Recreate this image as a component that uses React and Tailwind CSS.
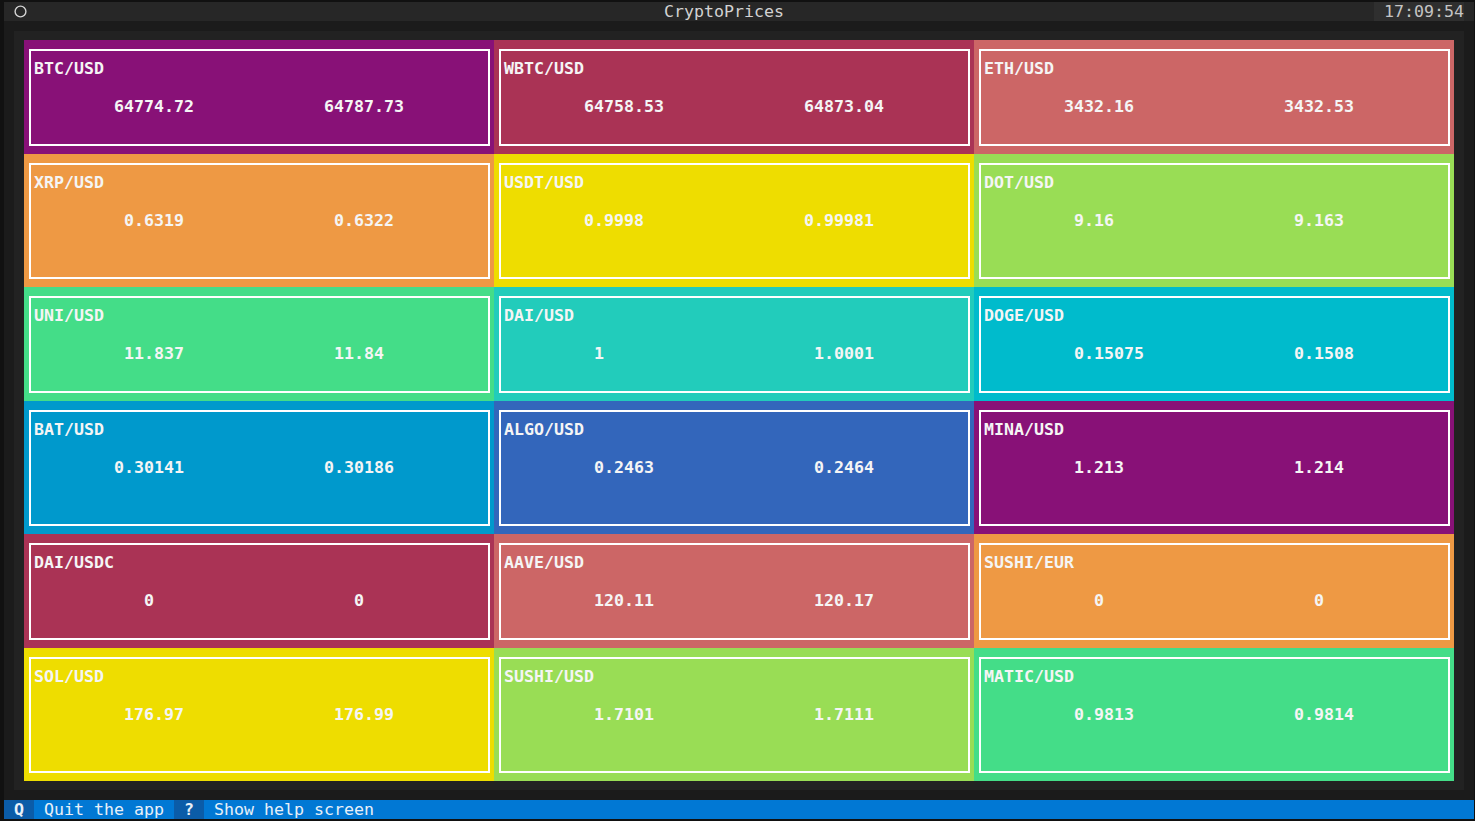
import React from "react";

const C = {
  purple: "bg-[#881177]",
  crimson: "bg-[#aa3355]",
  salmon: "bg-[#cc6666]",
  orange: "bg-[#ee9944]",
  yellow: "bg-[#eedd00]",
  lime: "bg-[#99dd55]",
  green: "bg-[#44dd88]",
  teal: "bg-[#22ccbb]",
  cyan: "bg-[#00bbcc]",
  blue: "bg-[#0099cc]",
  indigo: "bg-[#3366bb]",
};

const cells = [
  ["BTC/USD", "64774.72", 9, "64787.73", 30, C.purple],
  ["WBTC/USD", "64758.53", 9, "64873.04", 31, C.crimson],
  ["ETH/USD", "3432.16", 9, "3432.53", 31, C.salmon],
  ["XRP/USD", "0.6319", 10, "0.6322", 31, C.orange],
  ["USDT/USD", "0.9998", 9, "0.99981", 31, C.yellow],
  ["DOT/USD", "9.16", 10, "9.163", 32, C.lime],
  ["UNI/USD", "11.837", 10, "11.84", 31, C.green],
  ["DAI/USD", "1", 10, "1.0001", 32, C.teal],
  ["DOGE/USD", "0.15075", 10, "0.1508", 32, C.cyan],
  ["BAT/USD", "0.30141", 9, "0.30186", 30, C.blue],
  ["ALGO/USD", "0.2463", 10, "0.2464", 32, C.indigo],
  ["MINA/USD", "1.213", 10, "1.214", 32, C.purple],
  ["DAI/USDC", "0", 12, "0", 33, C.crimson],
  ["AAVE/USD", "120.11", 10, "120.17", 32, C.salmon],
  ["SUSHI/EUR", "0", 12, "0", 34, C.orange],
  ["SOL/USD", "176.97", 10, "176.99", 31, C.yellow],
  ["SUSHI/USD", "1.7101", 10, "1.7111", 32, C.lime],
  ["MATIC/USD", "0.9813", 10, "0.9814", 32, C.green],
];

function Cell({ title, v1, o1, v2, o2, bg }) {
  const line =
    " ".repeat(o1 - 1) + v1 + " ".repeat(Math.max(1, o2 - o1 - v1.length)) + v2;
  return (
    <div className={`${bg} pt-[9px] pr-[4px] pb-[8px] pl-[5px] flex`}>
      <div className="flex-1 border-2 border-white pl-[3px] pt-[8px] text-[#f5f5f5] font-bold">
        <div className="h-[19px] whitespace-pre">{title}</div>
        <div className="h-[19px]" />
        <div className="h-[19px] whitespace-pre">{line}</div>
      </div>
    </div>
  );
}

export default function App() {
  return (
    <div className="w-[1475px] h-[821px] bg-[#111111] pl-[4px] pr-[1px] pt-[2px] pb-[2px] flex flex-col font-['DejaVu_Sans_Mono',monospace] text-[16.61px] leading-[19px] overflow-hidden">
      <div className="h-[19px] bg-[#272727] flex items-center shrink-0">
        <div className="w-[30px] h-[19px] flex items-center">
          <svg width="13" height="13" viewBox="0 0 13 13" className="ml-[10px]">
            <circle cx="6.5" cy="6.5" r="5.4" fill="none" stroke="#d4d4d4" strokeWidth="1.4" />
          </svg>
        </div>
        <div className="flex-1 flex justify-center pl-[40px] text-[#d2d2d2] whitespace-pre">
          CryptoPrices
        </div>
        <div className="w-[90px] h-[19px] bg-[#2f2f2f] pl-[10px] text-[#c4c4c4] whitespace-pre">
          17:09:54
        </div>
        <div className="w-[10px]" />
      </div>
      <div className="h-[779px] bg-[#1b1b1b] px-[10px] py-[10px] flex shrink-0">
        <div className="flex-1 bg-[#222222] px-[10px] py-[9px]">
          <div className="grid grid-cols-[470px_480px_480px] grid-rows-[114px_133px_114px_133px_114px_133px]">
            {cells.map(([t, v1, o1, v2, o2, bg]) => (
              <Cell key={t} title={t} v1={v1} o1={o1} v2={v2} o2={o2} bg={bg} />
            ))}
          </div>
        </div>
      </div>
      <div className="h-[19px] bg-[#0178d4] flex shrink-0 text-[#e8f0f8]">
        <div className="w-[30px] bg-[#0b5ca8] text-center font-bold">Q</div>
        <div className="whitespace-pre"> Quit the app </div>
        <div className="w-[30px] bg-[#0b5ca8] text-center font-bold">?</div>
        <div className="whitespace-pre"> Show help screen </div>
      </div>
    </div>
  );
}
